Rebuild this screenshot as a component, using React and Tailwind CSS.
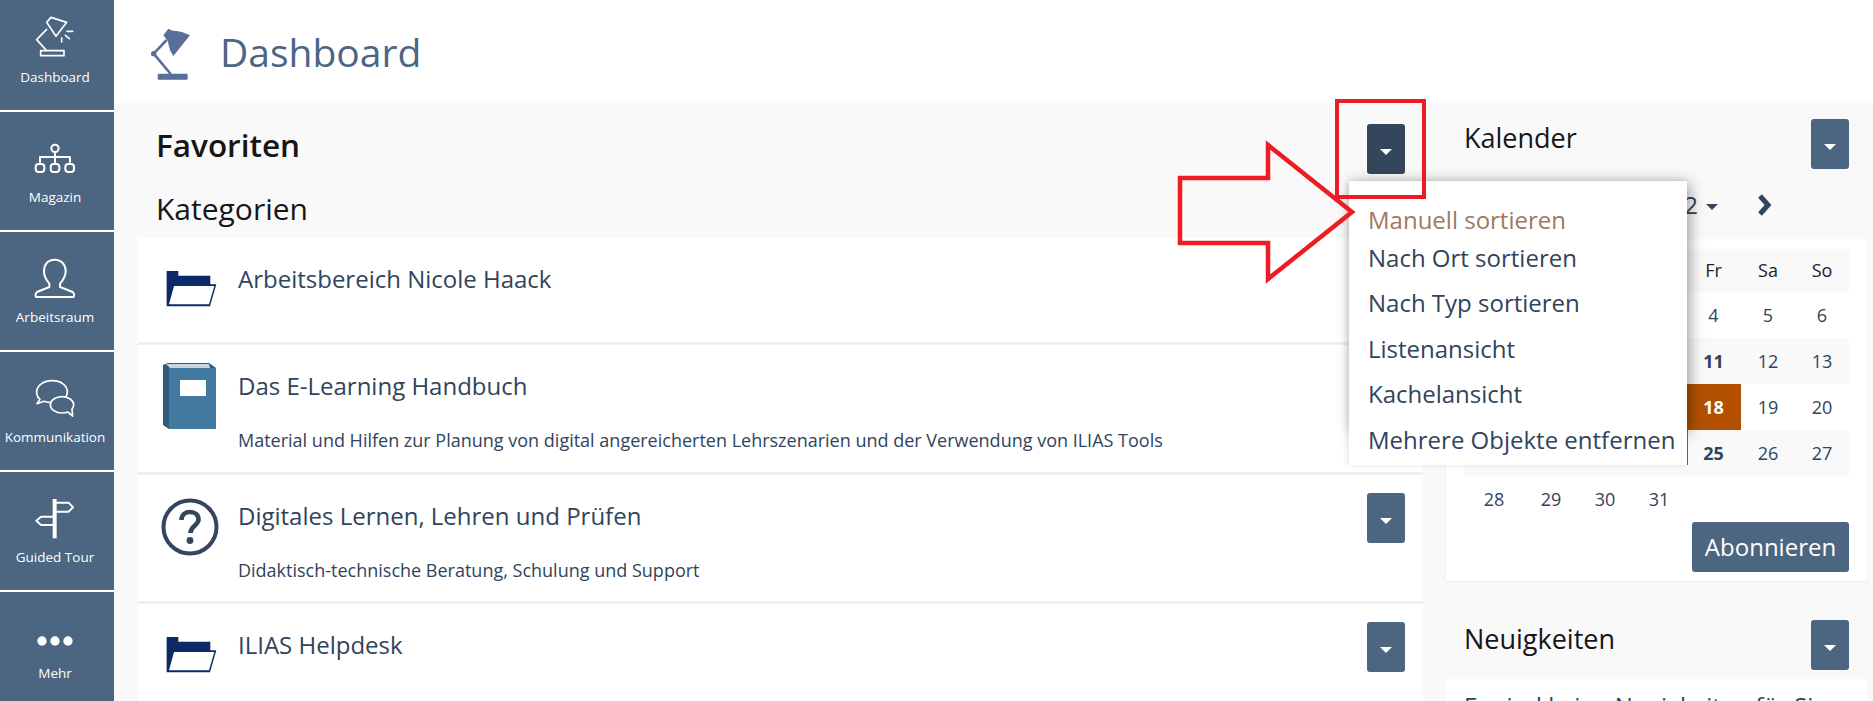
import React from 'react';

const navBg = '#4c6580';

function LampIcon() {
    return (
        <svg viewBox="0 0 210 180" className="w-[70px] h-[60px]" fill="none" stroke="#fff" strokeWidth="5" strokeLinejoin="round" strokeLinecap="round">
            <rect x="62" y="128" width="70" height="15" />
            <path d="M80 64 L50 95 L80 128" />
            <path d="M80 43 L93 28 L140 43 L108 85 Z" />
            <path d="M141 70 H158 M136 82 L148 92 M125 90 V102" />
        </svg>
    );
}

function TreeIcon() {
    return (
        <svg viewBox="0 0 210 180" className="w-[70px] h-[60px]" fill="none" stroke="#fff" strokeWidth="6" strokeLinejoin="round">
            <circle cx="105" cy="61" r="11" />
            <path d="M105 72 V106 M60 104 V87 H150 V104" />
            <rect x="47" y="108" width="26" height="24" rx="9" />
            <rect x="92" y="108" width="26" height="24" rx="9" />
            <rect x="136" y="108" width="26" height="24" rx="9" />
        </svg>
    );
}

function UserIcon() {
    return (
        <svg viewBox="0 0 210 180" className="w-[70px] h-[60px]" fill="none" stroke="#fff" strokeWidth="6" strokeLinejoin="round">
            <path d="M104 35 C84 35 72 49 72 70 C72 88 80 98 88 107 L88 117 L51 132 C46 135 45 147 49 147 L159 147 C164 147 163 135 158 132 L120 117 L120 107 C128 98 137 88 137 70 C137 49 124 35 104 35 Z" />
        </svg>
    );
}

function ChatIcon() {
    return (
        <svg viewBox="0 0 210 180" className="w-[70px] h-[60px]" stroke="#fff" strokeWidth="5" strokeLinejoin="round" fill={navBg}>
            <path d="M97 38 C72 38 50 52 50 72 C50 82 55 90 60 94 L51 107 L72 100 C80 103 88 104 97 104 C122 104 142 90 142 72 C142 52 122 38 97 38 Z" />
            <path d="M126 86 C107 86 91 97 91 110 C91 124 107 135 126 135 C132 135 138 134 143 132 L158 144 L156 124 C159 120 161 115 161 110 C161 97 145 86 126 86 Z" />
        </svg>
    );
}

function SignIcon() {
    return (
        <svg viewBox="0 0 210 180" className="w-[70px] h-[60px]" fill="none" stroke="#fff" strokeWidth="6" strokeLinejoin="round">
            <path d="M104 33 V151" strokeWidth="12" />
            <path d="M104 44 H146 L159 58 L146 71 H104" />
            <path d="M104 86 H63 L49 98 L63 111 H104" />
        </svg>
    );
}

function DotsIcon() {
    return (
        <svg viewBox="0 0 210 180" className="w-[70px] h-[60px]" fill="#fff">
            <circle cx="66" cy="99" r="14" />
            <circle cx="105" cy="99" r="14" />
            <circle cx="144" cy="99" r="14" />
        </svg>
    );
}

function NavItem({ icon, label, first, more }) {
    return (
        <div className={`flex flex-col items-center pr-[4px] text-white ${first ? 'h-[110px] pt-[8px]' : 'h-[120px] pt-[16px] border-t-[2px] border-white'}`}>
            {icon}
            <span className={`text-[13.5px] leading-[20px] ${more ? 'mt-[-5px]' : 'mt-[-1px]'}`}>{label}</span>
        </div>
    );
}

function Caret({ dark }) {
    return (
        <button className={`w-[38px] h-[50px] shrink-0 rounded-[3px] flex items-center justify-center ${dark ? 'bg-[#34465c]' : 'bg-[#4c6580]'}`}>
            <svg viewBox="0 0 12 6" className="w-[12px] h-[6px] mt-[5px]"><path d="M0 0 H12 L6 6 Z" fill="#fff" /></svg>
        </button>
    );
}

function FolderIcon() {
    return (
        <svg viewBox="0 0 240 210" className="w-[80px] h-[70px] mt-[17px] ml-[11px]">
            <path d="M35 48 H70 V62 H166 V88 H184 L165 154 H35 Z" fill="#0b2b68" />
            <path d="M57 93 H178 L162 148 H42 Z" fill="#fff" />
        </svg>
    );
}

function BookIcon() {
    return (
        <svg viewBox="0 0 53 66" className="w-[53px] h-[66px] mt-[18px]">
            <path d="M0 2 L5 0 H46 L53 5 V66 H6 L0 62 Z" fill="#2e5a7c" />
            <path d="M3 1 H46 L47 5 H7 Z" fill="#c9d6e0" />
            <rect x="6" y="5" width="47" height="61" fill="#42799f" />
            <rect x="17" y="17" width="26" height="16" fill="#fff" />
        </svg>
    );
}

function HelpIcon() {
    return (
        <svg viewBox="0 0 58 58" className="w-[58px] h-[58px] mt-[23px]" fill="none">
            <circle cx="29" cy="29" r="26.5" stroke="#34465c" strokeWidth="4" />
            <path d="M20.5 22 C20.5 16.5 24.5 14 29 14 C34 14 37.5 17 37.5 21.5 C37.5 27.5 29.5 27.5 29.5 35" stroke="#34465c" strokeWidth="4.6" />
            <circle cx="29" cy="42.5" r="3.4" fill="#34465c" />
        </svg>
    );
}

function ItemRow({ icon, title, desc, height }) {
    return (
        <div className={`flex items-start bg-white pr-[18px] border-b-[3px] border-[#f0f0f0] ${height}`}>
            <div className="w-[100px] shrink-0 flex justify-center pl-[3px]">{icon}</div>
            <div className="flex-1">
                <div className="mt-[25px] text-[24px] leading-[32px] text-[#30445c]">{title}</div>
                {desc && <div className="mt-[26px] text-[18px] leading-[24px] text-[#30445c]">{desc}</div>}
            </div>
            <div className="mt-[18px]"><Caret /></div>
        </div>
    );
}

const sortOptions = ['Nach Ort sortieren', 'Nach Typ sortieren', 'Listenansicht', 'Kachelansicht', 'Mehrere Objekte entfernen'];

function SortMenu() {
    return (
        <div className="absolute left-[1235px] top-[78px] w-[338px] h-[284px] z-10">
            <div className="absolute inset-0 shadow-[-2px_0_6px_rgba(0,0,0,0.1)]" />
            <div className="absolute left-0 right-0 top-0 h-[249px] shadow-[3px_2px_14px_rgba(0,0,0,0.35)]" />
            <div className="absolute right-[-1px] top-[249px] bottom-0 w-[1px] bg-[#a5500f]" />
            <div className="relative h-full bg-white pt-[24px] pl-[19px] text-[24px] text-[#30445c]">
                <div className="h-[30px] leading-[30px] text-[#a1785f]">Manuell sortieren</div>
                {sortOptions.map((opt) => (
                    <div key={opt} className="h-[45.5px] flex items-center whitespace-nowrap">{opt}</div>
                ))}
            </div>
        </div>
    );
}

const weekDays = ['Mo', 'Di', 'Mi', 'Do', 'Fr', 'Sa', 'So'];
const weeks = [
    ['', '1', '2', '3', '4', '5', '6'],
    ['7', '8', '9', '10', '11', '12', '13'],
    ['14', '15', '16', '17', '18', '19', '20'],
    ['21', '22', '23', '24', '25', '26', '27'],
    ['28', '29', '30', '31', '', '', ''],
];

function Calendar() {
    return (
        <div className="bg-white px-[18px] pt-[10px] pb-[9px] shadow-[0_1px_2px_rgba(0,0,0,0.06)]">
            <div className="grid grid-cols-[60px_54px_54px_54px_55px_54px_54px] h-[43px] bg-[#f9f9f9] items-center text-center text-[18px] text-[#222]">
                {weekDays.map((d) => <div key={d}>{d}</div>)}
            </div>
            {weeks.map((week, i) => (
                <div key={i} className={`grid grid-cols-[60px_54px_54px_54px_55px_54px_54px] h-[46px] text-center text-[18px] leading-[46px] text-[#30445c] ${i % 2 === 1 ? 'bg-[#f9f9f9]' : 'bg-white'}`}>
                    {week.map((day, j) => {
                        let cls = '';
                        if (day === '18') cls = 'bg-[#b25000] text-white font-bold';
                        else if (day === '11' || day === '25') cls = 'font-bold';
                        return <div key={j} className={cls}>{day}</div>;
                    })}
                </div>
            ))}
            <div className="flex justify-end">
                <button className="w-[157px] h-[50px] rounded-[3px] bg-[#4c6580] text-white text-[24px]">Abonnieren</button>
            </div>
        </div>
    );
}

export default function App() {
    return (
        <div className="relative flex w-full h-[701px] overflow-hidden bg-white font-['Open_Sans',sans-serif]">
            <aside className="w-[114px] shrink-0 bg-[#4c6580]">
                <NavItem first icon={<LampIcon />} label="Dashboard" />
                <NavItem icon={<TreeIcon />} label="Magazin" />
                <NavItem icon={<UserIcon />} label="Arbeitsraum" />
                <NavItem icon={<ChatIcon />} label="Kommunikation" />
                <NavItem icon={<SignIcon />} label="Guided Tour" />
                <NavItem more icon={<DotsIcon />} label="Mehr" />
            </aside>

            <main className="flex-1 min-w-0">
                <header className="h-[103px] flex items-center pl-[26px]">
                    <svg viewBox="0 0 240 240" className="w-[80px] h-[80px]" fill="#5a6e9a">
                        <rect x="53" y="185" width="90" height="18" rx="3" />
                        <circle cx="41" cy="125" r="8" />
                        <path d="M41 125 L80 84 M41 125 L92 186" stroke="#5a6e9a" strokeWidth="8" />
                        <path d="M70 70 L85 50 Q92 54 100 56 Q130 58 150 70 Q126 100 100 132 Q90 120 86 100 L84 88 Z" />
                    </svg>
                    <h1 className="mt-[2px] text-[39px] text-[#4c6586]">Dashboard</h1>
                </header>

                <div className="relative flex items-start h-[598px] bg-[#f9f9f9] pl-[24px]">
                    <section className="w-[1285px] shrink-0">
                        <div className="flex items-start justify-between h-[135px] pl-[18px] pr-[18px]">
                            <div>
                                <h2 className="mt-[21px] text-[31.5px] leading-[42px] font-semibold text-[#161616]">Favoriten</h2>
                                <h3 className="mt-[23px] text-[30px] leading-[40px] text-[#161616]">Kategorien</h3>
                            </div>
                            <div className="mt-[21px]"><Caret dark /></div>
                        </div>
                        <ItemRow height="h-[107px]" icon={<FolderIcon />} title="Arbeitsbereich Nicole Haack" />
                        <ItemRow height="h-[130px]" icon={<BookIcon />} title="Das E-Learning Handbuch" desc="Material und Hilfen zur Planung von digital angereicherten Lehrszenarien und der Verwendung von ILIAS Tools" />
                        <ItemRow height="h-[129px]" icon={<HelpIcon />} title="Digitales Lernen, Lehren und Prüfen" desc="Didaktisch-technische Beratung, Schulung und Support" />
                        <ItemRow height="h-[107px]" icon={<FolderIcon />} title="ILIAS Helpdesk" />
                    </section>
                    <SortMenu />

                    <section className="w-[421px] ml-[23px] shrink-0">
                        <div className="h-[136px] pl-[18px] pr-[18px]">
                            <div className="flex items-start justify-between pt-[16px]">
                                <h3 className="text-[27px] leading-[38px] text-[#161616]">Kalender</h3>
                                <Caret />
                            </div>
                            <div className="flex items-center justify-end gap-[8px] pr-[78px] h-[30px] mt-[21px] text-[24px] text-[#30445c]">
                                <svg viewBox="0 0 15 22" className="w-[15px] h-[22px]"><path d="M11 2 L3 11 L11 20" fill="none" stroke="#34465c" strokeWidth="5" /></svg>
                                <span>März 2022</span>
                                <svg viewBox="0 0 12 6" className="w-[12px] h-[6px] mt-[3px]"><path d="M0 0 H12 L6 6 Z" fill="#34465c" /></svg>
                                <svg viewBox="0 0 15 22" className="w-[15px] h-[22px] ml-[30px]"><path d="M4 2 L12 11 L4 20" fill="none" stroke="#34465c" strokeWidth="5" /></svg>
                            </div>
                        </div>
                        <Calendar />

                        <div className="mt-[32px] h-[66px] pl-[18px] pr-[18px] pt-[7px] flex items-start justify-between">
                            <h3 className="text-[27px] leading-[38px] text-[#161616]">Neuigkeiten</h3>
                            <Caret />
                        </div>
                        <div className="bg-white pl-[18px] pt-[11px] pb-[20px] text-[24px] leading-[32px] whitespace-nowrap text-[#30445c]">Es sind keine Neuigkeiten für Sie</div>
                    </section>
                </div>
            </main>

            {/* annotation drawn on the screenshot */}
            <div className="absolute left-[1335px] top-[99px] w-[91px] h-[100px] border-[4px] border-[#ed1c24] z-20" />
            <svg className="absolute left-[1170px] top-[130px] w-[200px] h-[165px] z-20" viewBox="1170 130 200 165" fill="none">
                <path d="M1180 178 H1268 V145 L1352 212 L1268 279 V243 H1180 Z" stroke="#ed1c24" strokeWidth="4.5" strokeLinejoin="miter" />
            </svg>
        </div>
    );
}
